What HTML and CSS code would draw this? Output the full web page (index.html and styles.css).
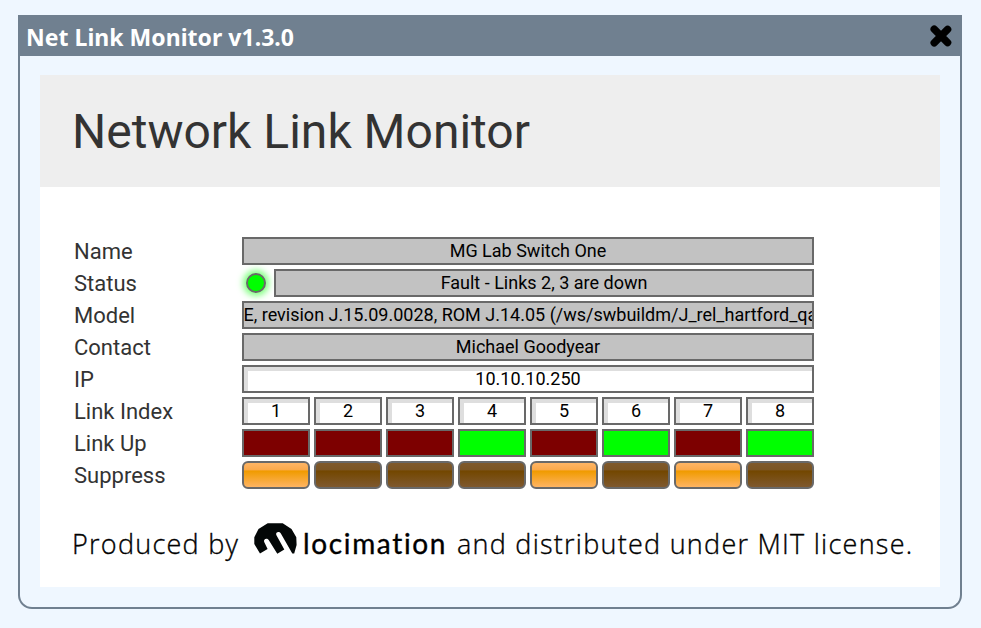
FILE: index.html
```
<!DOCTYPE html>
<html lang="en">
<head>
<meta charset="utf-8">
<title>Net Link Monitor</title>
<link rel="stylesheet" href="styles.css">
</head>
<body>
<div class="window">
  <header class="titlebar">
    <span class="title">Net Link Monitor v1.3.0</span>
    <svg class="close" width="22" height="22" viewBox="0 0 22 22"><path d="M4.2 4.2 17.6 17.6M17.6 4.4 4.2 17.8" stroke="#000" stroke-width="7.4" stroke-linecap="round"/></svg>
  </header>
  <main class="panel">
    <h1 class="banner">Network Link Monitor</h1>
    <div class="rows">
      <div class="row"><span class="label">Name</span><div class="field">MG Lab Switch One</div></div>
      <div class="row"><span class="label">Status</span><i class="led"></i><div class="field">Fault - Links 2, 3 are down</div></div>
      <div class="row"><span class="label">Model</span><div class="field clipped"><span>E, revision J.15.09.0028, ROM J.14.05 (/ws/swbuildm/J_rel_hartford_qa</span></div></div>
      <div class="row"><span class="label">Contact</span><div class="field">Michael Goodyear</div></div>
      <div class="row"><span class="label">IP</span><div class="field input">10.10.10.250</div></div>
      <div class="row"><span class="label">Link Index</span><div class="field input">1</div><div class="field input">2</div><div class="field input">3</div><div class="field input">4</div><div class="field input">5</div><div class="field input">6</div><div class="field input">7</div><div class="field input">8</div></div>
      <div class="row"><span class="label">Link Up</span><div class="field down"></div><div class="field down"></div><div class="field down"></div><div class="field up"></div><div class="field down"></div><div class="field up"></div><div class="field down"></div><div class="field up"></div></div>
      <div class="row"><span class="label">Suppress</span><div class="field button on"></div><div class="field button"></div><div class="field button"></div><div class="field button"></div><div class="field button on"></div><div class="field button"></div><div class="field button on"></div><div class="field button"></div></div>
    </div>
    <footer class="credit">
      <span class="by">Produced by</span>
      <svg class="logo" width="43" height="31" viewBox="0 0 43 31"><path fill="#030707" d="M6 30.6 .3 21V14.3L4.5 6 13.7 .2H28.7L37.5 6 42.3 14.3 42.6 22 40.2 30.5H38.3L26.7 10.3C25.3 7.8 21.2 8.8 22.3 12L30.3 26.5 23.3 30.8 14.7 17C13 14.6 9 16 10.2 19L13.6 26Z"/></svg>
      <span class="brand">locimation</span>
      <span class="rest">and distributed under MIT license.</span>
    </footer>
  </main>
</div>
</body>
</html>
```
FILE: styles.css
```
* { box-sizing: border-box; }
body {
  margin: 0;
  padding: 15px 19px 19px 18px;
  height: 628px;
  background: #eff7ff;
  font-family: Roboto, sans-serif;
  overflow: hidden;
}
.window {
  width: 944px;
  height: 594px;
  border: 2px solid #708090;
  border-top: 0;
  border-radius: 0 0 14px 14px;
}
.titlebar {
  display: flex;
  align-items: center;
  justify-content: space-between;
  height: 41px;
  padding: 3px 8px 0 6px;
  background: #708090;
}
.title {
  color: #fff;
  font: bold 23px/38px "Noto Sans", sans-serif;
  letter-spacing: 0.03px;
  white-space: nowrap;
}
.close { margin-top: -3px; }
.panel {
  width: 900px;
  height: 512px;
  margin: 19px 20px 0;
  background: #fff;
}
.banner {
  margin: 0;
  height: 112px;
  padding-left: 32px;
  background: #eee;
  color: #333;
  font-size: 48px;
  font-weight: 400;
  line-height: 114px;
  white-space: nowrap;
}
.rows {
  display: flex;
  flex-direction: column;
  gap: 4px;
  width: 740px;
  margin: 50px 0 0 34px;
}
.row { display: flex; gap: 4px; height: 28px; }
.label {
  flex: 0 0 164px;
  color: #333;
  font-size: 22px;
  line-height: 30px;
}
.field {
  flex: 1 1 0;
  min-width: 0;
  height: 28px;
  border: 2px solid #696969;
  background: #c2c2c2;
  color: #000;
  font-size: 18px;
  line-height: 24px;
  text-align: center;
  white-space: nowrap;
}
.clipped { display: flex; overflow: hidden; }
.clipped span { margin-left: -0.5px; }
.input { background: #fff; box-shadow: inset 4px 4px 0 #dedede; }
.down { background: #7d0000; }
.up { background: #0f0; }
.button {
  border-radius: 6px;
  background: linear-gradient(#7f592b 0, #7b5524 27%, #734700 34%, #7f592f 100%);
}
.button.on { background: linear-gradient(#ffb565 0, #fbaa4d 27%, #f09b00 34%, #ffb462 100%); }
.led {
  flex: none;
  width: 20px;
  height: 20px;
  margin: 4px;
  border: 2px solid #696969;
  border-radius: 50%;
  background: #0f0;
  box-shadow: 0 0 6px 3px rgba(0, 255, 0, .5);
}
.credit {
  display: flex;
  align-items: flex-start;
  height: 44px;
  margin: 34px 0 0 32px;
  color: #000;
  font: 300 27px/41px "Open Sans", sans-serif;
  -webkit-text-stroke: 0.35px #000;
  white-space: nowrap;
}
.by { width: 182px; letter-spacing: 1.25px; }
.brand {
  width: 160px;
  padding-left: 6px;
  font-family: Lato, sans-serif;
  font-size: 28px;
  font-weight: 400;
  letter-spacing: 1.65px;
}
.rest { letter-spacing: 1.25px; }
```
